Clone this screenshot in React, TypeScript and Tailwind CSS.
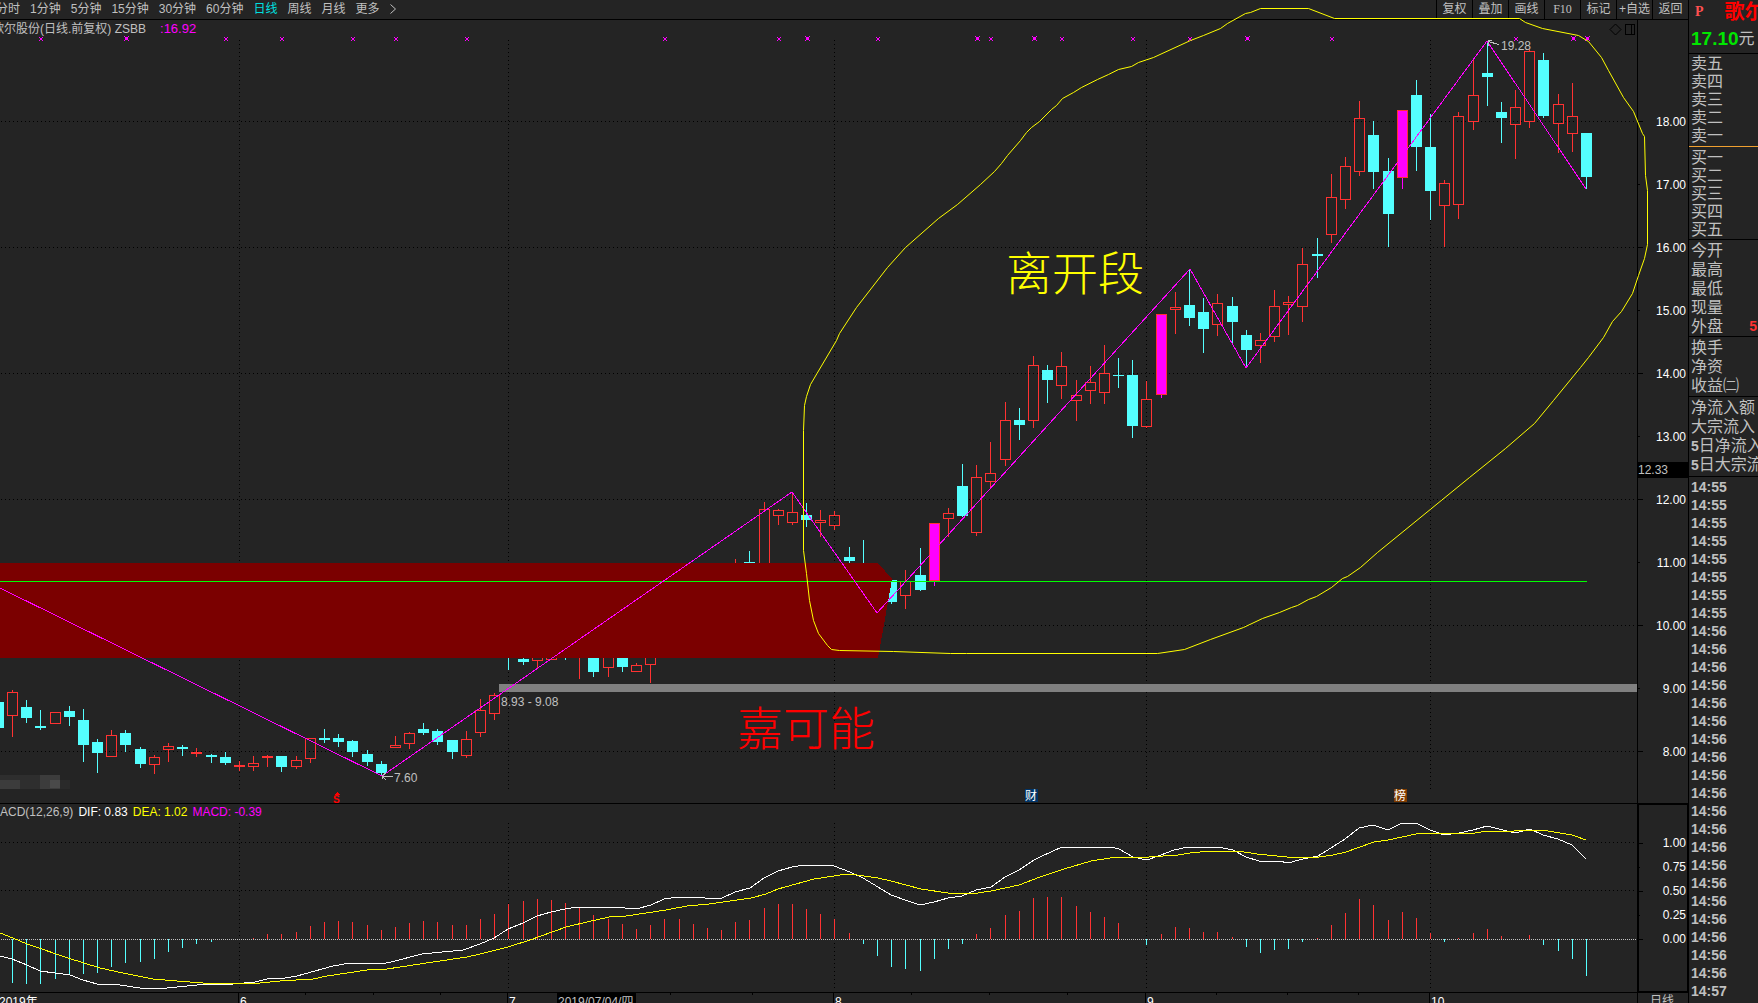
type Candle = [i: number, kind: "r" | "c" | "m", top: number, bottom: number, high: number, low: number];

const PERIODS = ["分时", "1分钟", "5分钟", "15分钟", "30分钟", "60分钟", "日线", "周线", "月线", "更多"];
const TOOLS = ["复权", "叠加", "画线", "F10", "标记", "+自选", "返回"];

const RED = "#ff3232";
const CYAN = "#54ffff";
const MAGENTA = "#ff00ff";

// candles left of / under / right of the red band, y values in chart pixels
const CANDLES: Candle[] = [
  [-1, "c", 702, 728, 702, 728],
  [0, "r", 692, 716, 690, 737],
  [1, "c", 707, 718, 700, 723],
  [2, "c", 726, 728, 710, 730],
  [3, "r", 712, 724, 712, 724],
  [4, "c", 711, 717, 706, 726],
  [5, "c", 720, 745, 709, 762],
  [6, "c", 742, 753, 739, 773],
  [7, "r", 735, 757, 730, 757],
  [8, "c", 733, 745, 730, 752],
  [9, "c", 749, 764, 747, 768],
  [10, "r", 757, 765, 755, 774],
  [11, "r", 746, 750, 743, 762],
  [12, "c", 747, 749, 745, 756],
  [13, "r", 752, 754, 748, 757],
  [14, "c", 755, 757, 754, 763],
  [15, "c", 757, 763, 752, 765],
  [16, "r", 765, 767, 761, 771],
  [17, "r", 763, 767, 756, 771],
  [18, "r", 756, 758, 755, 767],
  [19, "c", 756, 767, 756, 772],
  [20, "r", 760, 767, 756, 769],
  [21, "r", 738, 759, 738, 763],
  [22, "c", 738, 740, 729, 743],
  [23, "c", 738, 742, 734, 747],
  [24, "c", 741, 752, 740, 757],
  [25, "c", 754, 762, 750, 766],
  [26, "c", 764, 773, 761, 776],
  [27, "r", 745, 748, 736, 748],
  [28, "r", 733, 744, 732, 749],
  [29, "c", 729, 733, 723, 735],
  [30, "c", 731, 742, 729, 745],
  [31, "c", 740, 752, 740, 759],
  [32, "r", 739, 756, 731, 758],
  [33, "r", 710, 733, 699, 737],
  [34, "r", 695, 714, 693, 720],
  [35, "c", 640, 650, 640, 670],
  [36, "c", 659, 662, 650, 665],
  [37, "r", 640, 661, 640, 668],
  [38, "r", 640, 660, 640, 660],
  [39, "c", 640, 650, 640, 660],
  [40, "r", 640, 650, 640, 679],
  [41, "c", 640, 672, 640, 677],
  [42, "r", 640, 668, 640, 677],
  [43, "c", 640, 667, 640, 672],
  [44, "r", 665, 672, 663, 672],
  [45, "r", 640, 665, 640, 683],
  [51, "r", 570, 580, 559, 580],
  [52, "c", 562, 570, 551, 580],
  [53, "r", 509, 580, 502, 590],
  [54, "r", 510, 516, 509, 525],
  [55, "r", 512, 523, 492, 525],
  [56, "c", 515, 520, 503, 527],
  [57, "r", 520, 523, 510, 537],
  [58, "r", 515, 526, 511, 530],
  [59, "c", 557, 561, 547, 570],
  [60, "c", 570, 580, 540, 580],
  [62, "c", 580, 602, 578, 604],
  [63, "r", 581, 596, 570, 609],
  [64, "c", 575, 590, 548, 591],
  [65, "m", 523, 581, 523, 586],
  [66, "r", 513, 519, 508, 537],
  [67, "c", 486, 516, 464, 517],
  [68, "r", 477, 533, 465, 536],
  [69, "r", 473, 482, 442, 488],
  [70, "r", 420, 460, 402, 466],
  [71, "c", 420, 425, 408, 440],
  [72, "r", 365, 421, 356, 428],
  [73, "c", 370, 380, 365, 403],
  [74, "r", 366, 386, 352, 399],
  [75, "r", 395, 401, 380, 421],
  [76, "r", 382, 391, 366, 404],
  [77, "r", 373, 393, 345, 404],
  [78, "c", 375, 376, 358, 388],
  [79, "c", 375, 426, 360, 438],
  [80, "r", 399, 427, 381, 428],
  [81, "m", 314, 395, 314, 398],
  [82, "r", 307, 310, 292, 334],
  [83, "c", 305, 318, 269, 326],
  [84, "c", 312, 329, 298, 353],
  [85, "r", 303, 325, 294, 336],
  [86, "c", 306, 322, 297, 343],
  [87, "c", 335, 350, 330, 368],
  [88, "r", 340, 346, 333, 363],
  [89, "r", 306, 337, 290, 342],
  [90, "r", 302, 305, 296, 335],
  [91, "r", 264, 307, 248, 322],
  [92, "c", 254, 256, 238, 278],
  [93, "r", 197, 235, 174, 243],
  [94, "r", 166, 200, 157, 209],
  [95, "r", 118, 172, 101, 176],
  [96, "c", 135, 172, 121, 189],
  [97, "c", 171, 214, 158, 247],
  [98, "m", 110, 178, 110, 189],
  [99, "c", 95, 147, 80, 171],
  [100, "c", 147, 191, 114, 220],
  [101, "r", 183, 206, 180, 247],
  [102, "r", 116, 205, 112, 219],
  [103, "r", 95, 122, 58, 130],
  [104, "c", 73, 77, 42, 106],
  [105, "c", 112, 118, 102, 143],
  [106, "r", 107, 125, 90, 159],
  [107, "r", 51, 122, 49, 128],
  [108, "c", 60, 116, 53, 118],
  [109, "r", 104, 124, 94, 153],
  [110, "r", 116, 134, 83, 152],
  [111, "c", 133, 177, 133, 189],
];

// end of each MACD bar, the zero line is at 939
const BARS = [
  983, 984, 984, 979, 974, 974, 973, 967, 963, 962, 959, 952, 948, 944, 942, 939, 939, 938, 934, 934,
  932, 926, 922, 921, 922, 925, 930, 927, 923, 921, 922, 925, 925, 919, 914, 904, 901, 899, 900, 903,
  907, 915, 919, 924, 929, 925, 919, 919, 924, 928, 930, 922, 920, 908, 904, 904, 909, 914, 919, 933,
  944, 956, 967, 969, 971, 959, 949, 944, 934, 928, 915, 911, 898, 897, 897, 906, 912, 917, 923, 939,
  945, 934, 927, 928, 932, 932, 937, 947, 953, 950, 949, 942, 938, 925, 913, 899, 905, 920, 912, 918,
  933, 942, 938, 933, 929, 936, 939, 935, 945, 951, 959, 976,
];

const DIF =
  "0,956 12,959 27,965 40,971 70,975 83,980 97,984 120,985 140,988 154,989 167,988 187,986 207,984 233,984 255,982 267,979 285,978 297,976 333,966 350,963 370,963 382,964 395,961 422,954 463,950 480,944 494,938 508,929 523,923 537,916 551,912 565,909 578,907 592,908 614,907 636,909 651,905 664,899 678,897 697,897 705,898 722,898 735,892 750,888 764,878 778,871 792,867 805,865 834,866 850,872 863,878 878,887 891,895 905,900 920,905 934,902 948,898 962,896 976,890 991,887 1005,877 1019,870 1034,860 1040,857 1062,847 1080,848 1087,847 1111,847 1119,849 1133,857 1147,860 1161,855 1174,850 1188,847 1202,848 1218,847 1233,850 1246,857 1259,861 1279,861 1288,863 1303,859 1318,856 1331,848 1345,839 1359,828 1373,825 1388,830 1402,823 1416,823 1430,830 1444,835 1459,833 1473,830 1487,826 1515,833 1530,829 1543,835 1558,839 1572,845 1586,859";

const DEA =
  "0,933 13,938 27,944 68,958 100,968 123,973 153,979 177,981 203,983 260,983 280,981 313,979 327,976 367,970 387,969 433,962 467,957 480,954 508,947 530,940 566,927 587,922 609,917 626,916 666,910 687,906 709,904 751,898 766,894 778,889 814,879 834,876 846,874 857,875 878,878 891,881 921,889 948,893 978,893 991,891 1019,885 1040,877 1064,869 1091,861 1117,857 1149,857 1178,855 1190,853 1210,851 1238,851 1257,854 1287,857 1319,857 1333,855 1346,852 1374,842 1388,840 1416,834 1429,833 1447,834 1475,833 1487,831 1514,831 1530,830 1548,831 1572,835 1586,840";

const LOOP =
  "836,340 839,333 856,307 887,267 905,247 938,218 957,204 980,184 994,171 1001,163 1007,155 1020,140 1026,132 1031,127 1039,121 1051,109 1056,105 1062,98 1073,92 1081,87 1097,79 1108,74 1118,69 1131,66 1138,62 1153,57 1190,40 1203,35 1220,28 1227,23 1245,13 1250,12 1260,8 1308,8 1334,18 1519,18 1525,22 1542,28 1578,35 1588,41 1601,57 1608,70 1623,97 1633,111 1642,133 1644,136 1645,175 1647,190 1647,244 1644,258 1638,275 1632,293 1621,311 1612,321 1603,337 1588,357 1580,367 1553,400 1534,423 1505,448 1469,477 1377,552 1360,567 1347,576 1342,578 1331,587 1316,596 1308,599 1297,605 1291,607 1279,612 1262,618 1243,627 1210,639 1184,649 1157,653 966,653 950,653 893,651 839,650 831,649 827,645 818,633 813,620 809,600 806,573 803,550 803,430 804,405 806,396 810,384";

const SMALL_MARKS = [41, 226, 282, 353, 396, 467, 665, 779, 878, 991, 1062, 1133, 1190, 1332, 1516];
const BIG_MARKS = [126, 807, 977, 1034, 1247, 1573, 1587];

const MONTHS = [
  { x: 239, label: "6" },
  { x: 508, label: "7" },
  { x: 834, label: "8" },
  { x: 1146, label: "9" },
  { x: 1430, label: "10" },
];
const WEEK_TICKS = [305, 373, 440, 670, 752, 911, 989, 1067, 1216, 1287, 1358];

const PRICES = ["18.00", "17.00", "16.00", "15.00", "14.00", "13.00", "12.00", "11.00", "10.00", "9.00", "8.00"];

const TIMES = [...Array(8).fill("14:55"), ...Array(20).fill("14:56"), "14:57"];

function xOf(i: number) {
  return Math.round(12.05 + 14.18 * i);
}

function CandleShape({ c }: { c: Candle }) {
  const [i, kind, top, bottom, high, low] = c;
  const x = xOf(i);
  if (kind === "r") {
    return (
      <g>
        <rect x={x} y={high} width={1} height={top - high} fill={RED} />
        <rect x={x} y={bottom} width={1} height={low - bottom} fill={RED} />
        <rect x={x - 4.5} y={top + 0.5} width={10} height={bottom - top - 1} fill="none" stroke={RED} />
      </g>
    );
  }
  const color = kind === "c" ? CYAN : MAGENTA;
  return (
    <g>
      <rect x={x} y={high} width={1} height={low - high} fill={color} />
      <rect x={x - 5} y={top} width={11} height={bottom - top} fill={color} />
      {kind === "m" && (
        <rect x={x - 4.5} y={top + 0.5} width={10} height={bottom - top - 1} fill="none" stroke={RED} />
      )}
    </g>
  );
}

function MonthLines({ from, to }: { from: number; to: number }) {
  return (
    <>
      {MONTHS.map((m) => (
        <line key={m.x} x1={m.x + 0.5} x2={m.x + 0.5} y1={from} y2={to} stroke="#000" strokeDasharray="1 3" />
      ))}
    </>
  );
}

function PriceChart() {
  return (
    <svg viewBox="0 20 1637 783" className="block h-full w-full" shapeRendering="crispEdges">
      {[121, 247, 373, 499, 625, 751].map((y) => (
        <line key={y} x1={1} x2={1636} y1={y + 0.5} y2={y + 0.5} stroke="#000" strokeDasharray="1 3" />
      ))}
      <MonthLines from={40} to={790} />

      <rect x={499} y={684} width={1138} height={8} fill="#808080" />
      {CANDLES.map((c) => (
        <CandleShape key={c[0]} c={c} />
      ))}
      <polygon points="0,563 878,563 892,579 888,602 878,658 0,658" fill="#7b0000" />
      <rect x={0} y={581} width={1587} height={1} fill="#00ff00" />
      <polyline
        points="0,588 382,776 792,492 877,613 1190,269 1246,368 1487,41 1586,189"
        fill="none"
        stroke={MAGENTA}
      />

      {SMALL_MARKS.map((x) => (
        <path
          key={x}
          d={`M${x - 2} 37h1v1h-1zM${x + 1} 37h1v1h-1zM${x - 1} 38h2v2h-2zM${x - 2} 40h1v1h-1zM${x + 1} 40h1v1h-1z`}
          fill={MAGENTA}
        />
      ))}
      {BIG_MARKS.map((x) => (
        <path
          key={x}
          d={`M${x - 2} 36h1v1h-1zM${x + 2} 36h1v1h-1zM${x - 1} 37h3v3h-3zM${x - 2} 40h1v1h-1zM${x + 2} 40h1v1h-1z`}
          fill={MAGENTA}
        />
      ))}

      {/* high / low arrows */}
      <path d="M1488 41.5L1499 44.5M1488 40.5h4M1488.5 41v5" stroke="#c0c0c0" fill="none" />
      <path d="M382 776.5h11M382.5 776v3M382 776l4 -3M382 776l4 4" stroke="#c0c0c0" fill="none" />

      {/* masked account name */}
      <rect x={0} y={775} width={40} height={14} fill="#2e2e2e" />
      <rect x={0} y={780} width={20} height={9} fill="#3c3c3c" />
      <rect x={40} y={775} width={20} height={14} fill="#3c3c3c" />
      <rect x={50} y={780} width={10} height={8} fill="#4a4a4a" />
      <rect x={60} y={780} width={10} height={9} fill="#2a2a2a" />

      <g fill="none" stroke="#000">
        <path d="M1615.5 24l5.5 5.5l-5.5 5.5l-5.5 -5.5z" shapeRendering="auto" />
        <path d="M1625.5 24.5h9v10h-9zM1631.5 24v10" />
      </g>

      <g fontFamily="Liberation Sans" fontSize={12} fill="#c0c0c0">
        <text x={1501} y={50}>19.28</text>
        <text x={394} y={782}>7.60</text>
        <text x={501} y={706}>8.93 - 9.08</text>
      </g>
      <path d="M337 792l3 3h-6z" fill="#f00" />
      <text x={333} y={803} fontFamily="Liberation Sans" fontSize={10} fontWeight={700} fill="#f00">
        S
      </text>
      <rect x={1025} y={789} width={13} height={13} fill="#003468" />
      <rect x={1394} y={789} width={13} height={13} fill="#803c00" />
      <g fontFamily="Noto Sans CJK SC" fontSize={12} fill="#fff">
        <text x={1025} y={800}>财</text>
        <text x={1394} y={800}>榜</text>
      </g>
      <g fontFamily="Noto Sans CJK SC" fontSize={46} fontWeight={300}>
        <text x={1006} y={290} fill="#ff0">离开段</text>
        <text x={737} y={745} fill="#f00">嘉可能</text>
      </g>
    </svg>
  );
}

function MacdChart() {
  return (
    <svg viewBox="0 804 1637 188" className="block h-full w-full" shapeRendering="crispEdges">
      {[842, 890].map((y) => (
        <line key={y} x1={1} x2={1636} y1={y + 0.5} y2={y + 0.5} stroke="#000" strokeDasharray="1 3" />
      ))}
      <MonthLines from={823} to={990} />
      {BARS.map((y, i) => (
        <rect
          key={i}
          x={xOf(i)}
          y={Math.min(y, 939)}
          width={1}
          height={Math.abs(y - 939)}
          fill={y < 939 ? RED : CYAN}
        />
      ))}
      <line x1={1} x2={1636} y1={939.5} y2={939.5} stroke="#c0c0c0" strokeDasharray="1 1" />
      <polyline points={DIF} fill="none" stroke="#fff" />
      <polyline points={DEA} fill="none" stroke="#ff0" />
    </svg>
  );
}

function TimeAxis() {
  return (
    <svg viewBox="0 993 1637 10" className="block h-full w-full" shapeRendering="crispEdges">
      {MONTHS.map((m) => (
        <rect key={m.x} x={m.x - 1} y={993} width={1} height={10} fill="#000" />
      ))}
      {WEEK_TICKS.map((x) => (
        <rect key={x} x={x} y={993} width={1} height={2} fill="#000" />
      ))}
      <rect x={557} y={993} width={79} height={10} fill="#000" />
      <g fontFamily="Liberation Sans, Noto Sans CJK SC" fontSize={12} fill="#fff">
        <text x={-1} y={1006}>2019年</text>
        {MONTHS.map((m) => (
          <text key={m.x} x={m.x + 1} y={1006}>
            {m.label}
          </text>
        ))}
        <text x={558} y={1006} fill="#c0c0c0">2019/07/04/四</text>
      </g>
    </svg>
  );
}

function Toolbar() {
  return (
    <header className="flex h-5 shrink-0 items-stretch justify-between overflow-hidden border-b border-black">
      <nav className="-ml-1 flex items-center gap-[10px] pb-[2px] whitespace-nowrap">
        {PERIODS.map((p) => (
          <button key={p} className={p === "日线" ? "text-[#00e0e0]" : ""}>
            {p}
          </button>
        ))}
        <svg viewBox="0 0 6 10" className="h-[10px] w-[6px]" fill="none" stroke="#c0c0c0">
          <path d="M.5 .5L5.5 5L.5 9.5" />
        </svg>
      </nav>
      <div className="flex">
        {TOOLS.map((t) => (
          <button
            key={t}
            className={
              t === "F10"
                ? "w-9 border-l border-black pb-[2px] font-['Liberation_Serif']"
                : "w-9 border-l border-black pb-[2px] whitespace-nowrap"
            }
          >
            {t}
          </button>
        ))}
      </div>
    </header>
  );
}

function PriceAxis() {
  return (
    <div className="relative w-[51px] shrink-0 border-l border-black pt-[70px] text-white">
      {PRICES.map((p, i) => (
        <div key={p} className="flex h-[63px] items-center justify-between pr-[2px]">
          <span className={i % 2 ? "h-px w-[2px] bg-black" : "h-px w-[5px] bg-black"} />
          {p}
        </div>
      ))}
      <div className="absolute inset-x-0 top-[442px] h-4 bg-black text-[#c0c0c0]">12.33</div>
    </div>
  );
}

function MacdAxis() {
  return (
    <div className="w-[51px] shrink-0 border-l border-black text-white">
      <div className="h-full border border-black pt-[26px]">
        {["1.00", "0.75", "0.50", "0.25", "0.00"].map((v, i) => (
          <div key={v} className="flex h-6 items-center justify-between pr-px">
            <span className={i % 2 ? "h-px w-px bg-black" : "h-px w-1 bg-black"} />
            {v}
          </div>
        ))}
      </div>
    </div>
  );
}

function Rows({ items, className }: { items: string[]; className: string }) {
  return (
    <ul className={className}>
      {items.map((s) => (
        <li key={s} className="flex justify-between whitespace-nowrap">
          <span>
            {s.startsWith("5") ? (
              <>
                <b className="text-sm leading-none">5</b>
                {s.slice(1)}
              </>
            ) : (
              s
            )}
          </span>
          {s === "外盘" && <b className="pr-[1px] text-sm leading-[19px] text-[#ff3232]">5</b>}
        </li>
      ))}
    </ul>
  );
}

function Sidebar() {
  return (
    <aside className="w-[70px] shrink-0 overflow-hidden border-l border-black text-base">
      <div className="h-[54px] overflow-hidden border-b border-black whitespace-nowrap">
        <div className="flex h-6 items-center gap-[21px] pl-[6px]">
          <span className="font-['Liberation_Serif'] text-sm font-bold text-[#ff5050]">P</span>
          <span className="text-xl leading-6 font-bold text-[#ff0000]">歌尔</span>
        </div>
        <div className="flex h-[29px] items-center pl-[2px]">
          <span className="text-[19px] leading-none font-bold text-[#00e600]">17.10</span>
          <span className="leading-none">元</span>
        </div>
      </div>
      <Rows
        items={["卖五", "卖四", "卖三", "卖二", "卖一"]}
        className="border-b border-[#f0a030] pt-px pb-px pl-[2px] leading-[18px]"
      />
      <Rows
        items={["买一", "买二", "买三", "买四", "买五"]}
        className="border-b border-black pt-[2px] pl-[2px] leading-[18px]"
      />
      <Rows
        items={["今开", "最高", "最低", "现量", "外盘"]}
        className="border-b border-black pt-px pl-[2px] leading-[19px]"
      />
      <Rows
        items={["换手", "净资", "收益㈡"]}
        className="border-b border-black pt-px pb-px pl-[2px] leading-[19px]"
      />
      <Rows
        items={["净流入额", "大宗流入", "5日净流入", "5日大宗流"]}
        className="border-b border-black pt-px pb-[2px] pl-[2px] leading-[19px]"
      />
      <ul className="pt-px pl-[2px] text-sm leading-[18px] font-bold">
        {TIMES.map((t, i) => (
          <li key={i}>{t}</li>
        ))}
      </ul>
    </aside>
  );
}

export default function App() {
  return (
    <div className="relative flex h-screen overflow-hidden bg-[#242424] font-['Liberation_Sans','Noto_Sans_CJK_SC',sans-serif] text-xs text-[#c0c0c0]">
      <main className="flex min-w-0 flex-1 flex-col">
        <Toolbar />
        <section className="flex min-h-0 flex-1 border-b border-black">
          <div className="relative min-w-0 flex-1 overflow-hidden">
            <PriceChart />
            <div className="absolute top-[1px] -left-2 flex whitespace-nowrap">
              <span>歌尔股份(日线.前复权) ZSBB</span>
              <span className="pl-[14px] text-[13px] leading-4 text-[#ff00ff]">:16.92</span>
            </div>
          </div>
          <PriceAxis />
        </section>
        <section className="flex h-[189px] shrink-0 border-b border-black">
          <div className="relative min-w-0 flex-1 overflow-hidden">
            <MacdChart />
            <div className="absolute top-0 -left-[10px] flex gap-[5px] whitespace-nowrap">
              <span>MACD(12,26,9)</span>
              <span className="text-white">DIF: 0.83</span>
              <span className="text-[#ffff00]">DEA: 1.02</span>
              <span className="text-[#ff00ff]">MACD: -0.39</span>
            </div>
          </div>
          <MacdAxis />
        </section>
        <footer className="flex h-[10px] shrink-0 overflow-hidden">
          <div className="min-w-0 flex-1">
            <TimeAxis />
          </div>
          <div className="w-[51px] border-l border-black pl-3 leading-4">日线</div>
        </footer>
      </main>
      <Sidebar />
      {/* hand-drawn loop runs over the toolbar and the price axis */}
      <svg viewBox="0 0 1758 1003" className="pointer-events-none absolute inset-0 h-full w-full">
        <polygon
          points={LOOP}
          transform="translate(.5 .5)"
          fill="none"
          stroke="#ffff00"
        />
      </svg>
    </div>
  );
}
